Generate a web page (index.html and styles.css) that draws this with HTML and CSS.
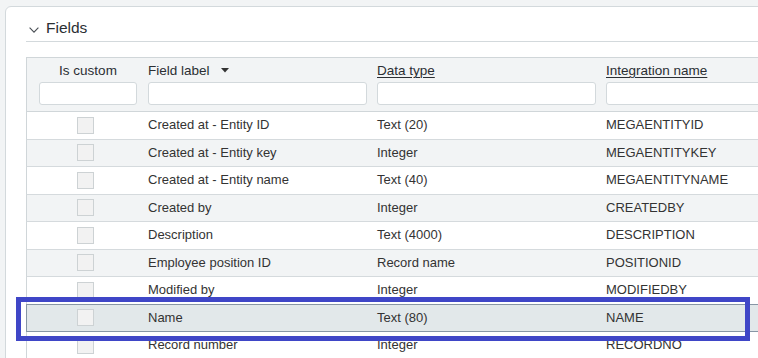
FILE: index.html
```html
<!DOCTYPE html>
<html lang="en">
<head>
<meta charset="utf-8">
<title>Fields</title>
<link rel="stylesheet" href="styles.css">
</head>
<body>
<div class="page">
  <section class="card">
    <div class="card-title">
      <svg class="chevron" width="10" height="6" viewBox="0 0 10 6"><polyline points="0.6,0.6 5,5.2 9.4,0.6" fill="none" stroke="#4a4f55" stroke-width="1.1"/></svg>
      <span>Fields</span>
    </div>
    <div class="grid">
      <div class="row head">
        <div class="cell hc1"><div class="label">Is custom</div><div class="filter small"></div></div>
        <div class="cell"><div class="label">Field label <svg class="sort" width="8" height="5" viewBox="0 0 8 5"><polygon points="0,0 8,0 4,4.5" fill="#333"/></svg></div><div class="filter"></div></div>
        <div class="cell"><div class="label"><u>Data type</u></div><div class="filter"></div></div>
        <div class="cell"><div class="label"><u>Integration name</u></div><div class="filter"></div></div>
      </div>
      <div class="row"><div class="cell c1"><span class="cb"></span></div><div class="cell">Created at - Entity ID</div><div class="cell">Text (20)</div><div class="cell">MEGAENTITYID</div></div>
      <div class="row alt"><div class="cell c1"><span class="cb"></span></div><div class="cell">Created at - Entity key</div><div class="cell">Integer</div><div class="cell">MEGAENTITYKEY</div></div>
      <div class="row"><div class="cell c1"><span class="cb"></span></div><div class="cell">Created at - Entity name</div><div class="cell">Text (40)</div><div class="cell">MEGAENTITYNAME</div></div>
      <div class="row alt"><div class="cell c1"><span class="cb"></span></div><div class="cell">Created by</div><div class="cell">Integer</div><div class="cell">CREATEDBY</div></div>
      <div class="row"><div class="cell c1"><span class="cb"></span></div><div class="cell">Description</div><div class="cell">Text (4000)</div><div class="cell">DESCRIPTION</div></div>
      <div class="row alt"><div class="cell c1"><span class="cb"></span></div><div class="cell">Employee position ID</div><div class="cell">Record name</div><div class="cell">POSITIONID</div></div>
      <div class="row"><div class="cell c1"><span class="cb"></span></div><div class="cell">Modified by</div><div class="cell">Integer</div><div class="cell">MODIFIEDBY</div></div>
      <div class="row selected"><div class="cell c1"><span class="cb"></span></div><div class="cell">Name</div><div class="cell">Text (80)</div><div class="cell">NAME</div></div>
      <div class="row"><div class="cell c1"><span class="cb"></span></div><div class="cell">Record number</div><div class="cell">Integer</div><div class="cell">RECORDNO</div></div>
    </div>
  </section>
  <div class="highlight"></div>
</div>
</body>
</html>
```

FILE: styles.css
```css
html, body {
  margin: 0;
  padding: 0;
  background: #f2f4f5;
  overflow: hidden;
  width: 758px;
  height: 358px;
}
body {
  font-family: "Liberation Sans", Arial, sans-serif;
  color: #333;
}
.page {
  position: relative;
  width: 758px;
  height: 358px;
  overflow: hidden;
  box-sizing: border-box;
  padding: 6px 0 0 5px;
}
.card {
  width: 900px;
  height: 500px;
  background: #fff;
  border: 1px solid #d3d9dc;
  border-radius: 6px;
  padding: 0 0 0 20px;
}
.card-title {
  display: flex;
  align-items: center;
  gap: 7px;
  padding: 11px 0 3px 3px;
  line-height: 20px;
  height: 20px;
  font-size: 15.5px;
  color: #2b2f33;
  border-bottom: 1px solid #d3d9dc;
}
.chevron {
  margin-top: 3px;
}
.grid {
  margin-top: 15px;
  border-top: 1px solid #d0d6d9;
}
.row {
  display: grid;
  grid-template-columns: 116px 229px 229px 320px;
  height: 27.5px;
  box-sizing: border-box;
  border-left: 1px solid #d0d6d9;
  border-bottom: 1px solid #d5dadd;
  font-size: 13px;
  align-items: center;
}
.row.alt {
  background: #f2f4f5;
}
.row.head {
  height: auto;
  background: #f2f4f5;
  align-items: start;
  border-bottom-color: #d0d6d9;
}
.row.selected {
  background: #e2e8ea;
  border-left-color: #8796a5;
  border-bottom-color: #8796a5;
  box-shadow: 0 -1px 0 #8796a5;
}
.cell {
  padding: 0 5px 1px;
  white-space: nowrap;
}
.row.head .cell {
  padding: 5px 5px 6px;
}
.row.head .cell.hc1 {
  padding: 5px 6px 6px 12px;
  text-align: center;
}
.cell.c1 {
  display: flex;
  justify-content: center;
  padding: 0;
}
.label {
  font-size: 13.5px;
  line-height: 16px;
  margin-bottom: 3px;
  color: #2b2f33;
}
.label u {
  text-decoration-thickness: 1px;
  text-underline-offset: 2px;
}
.sort {
  margin-left: 8px;
  vertical-align: 2px;
}
.filter {
  height: 23px;
  box-sizing: border-box;
  width: 219px;
  background: #fff;
  border: 1px solid #d3d9dc;
  border-radius: 3px;
}
.filter.small {
  width: 98px;
}
.cb {
  width: 17px;
  height: 17px;
  box-sizing: border-box;
  border: 1px solid #cdd2d4;
  background: #f2f2f2;
}
.highlight {
  position: absolute;
  left: 16px;
  top: 297px;
  width: 734px;
  height: 44px;
  box-sizing: border-box;
  border: 5.5px solid #3f46c7;
  pointer-events: none;
}
```
